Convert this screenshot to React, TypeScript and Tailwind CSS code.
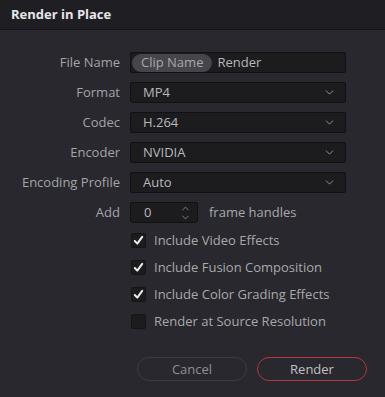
import { ChevronDown, ChevronUp } from 'lucide-react';

const font = { fontFamily: '"Open Sans", "Noto Sans", sans-serif' };

function Label({ children }: { children: React.ReactNode }) {
  return <div className="w-[130px] shrink-0 pr-[10px] text-right text-[#a4a4a8]">{children}</div>;
}

function Select({ value }: { value: string }) {
  return (
    <div className="flex h-[21px] w-[216px] items-center justify-between rounded-[2px] border border-[#111113] bg-[#1c1c1f] pl-[12px] pr-[9px] text-[#b8b8bc]">
      <span>{value}</span>
      <ChevronDown size={13} strokeWidth={1.6} className="text-[#a0a0a4]" />
    </div>
  );
}

function Check({ label, checked }: { label: string; checked: boolean }) {
  return (
    <div className="flex h-[27px] items-center pl-[131px]">
      <div className="flex h-[15px] w-[15px] items-center justify-center rounded-[2px] border border-[#151517] bg-[#1c1c1f]">
        {checked && (
          <svg width="11" height="11" viewBox="0 0 11 11">
            <path d="M1.8 6 L4.3 8.6 L9.2 1.8" fill="none" stroke="#ececec" strokeWidth="2" strokeLinecap="round" strokeLinejoin="round" />
          </svg>
        )}
      </div>
      <span className="ml-[8px] text-[#a8a8ac]">{label}</span>
    </div>
  );
}

export default function App() {
  const selects = [
    ['Format', 'MP4'],
    ['Codec', 'H.264'],
    ['Encoder', 'NVIDIA'],
    ['Encoding Profile', 'Auto'],
  ];

  return (
    <div style={font} className="flex h-[397px] w-[385px] flex-col bg-[#28282e] text-[13px] leading-none">
      <div className="flex h-[30px] shrink-0 items-center border-b border-[#141416] bg-[#1f1f23] pl-[11px] text-[13px] font-bold text-[#e6e6e8]">
        Render in Place
      </div>

      <div className="flex flex-col pt-[22px]">
        <div className="flex h-[30px] items-start">
          <div className="flex h-[21px] items-center">
            <Label>File Name</Label>
          </div>
          <div className="flex h-[21px] w-[216px] items-center rounded-[2px] border border-[#111113] bg-[#1c1c1f] pl-[1px] text-[#b8b8bc]">
            <span className="flex h-[18px] items-center rounded-full bg-[#45454b] px-[9px] text-[#a8a8ac]">Clip Name</span>
            <span className="ml-[5px]">Render</span>
          </div>
        </div>

        {selects.map(([label, value]) => (
          <div key={label} className="flex h-[30px] items-start">
            <div className="flex h-[21px] items-center">
              <Label>{label}</Label>
            </div>
            <Select value={value} />
          </div>
        ))}

        <div className="flex h-[25px] items-start">
          <div className="flex h-[21px] items-center">
            <Label>Add</Label>
          </div>
          <div className="flex h-[21px] w-[68px] items-center justify-between rounded-[2px] border border-[#111113] bg-[#1c1c1f] pl-[13px] pr-[6px] text-[#b8b8bc]">
            <span>0</span>
            <div className="flex flex-col items-center text-[#a0a0a4]">
              <ChevronUp size={11} strokeWidth={1.6} className="-mb-[2px]" />
              <ChevronDown size={11} strokeWidth={1.6} />
            </div>
          </div>
          <div className="flex h-[21px] items-center pl-[11px] text-[#a8a8ac]">frame handles</div>
        </div>

        <div className="flex flex-col">
          <Check label="Include Video Effects" checked />
          <Check label="Include Fusion Composition" checked />
          <Check label="Include Color Grading Effects" checked />
          <Check label="Render at Source Resolution" checked={false} />
        </div>
      </div>

      <div className="mt-[22px] flex items-center gap-[10px] pl-[137px]">
        <button className="flex h-[24px] w-[110px] items-center justify-center rounded-full border border-[#3c3c42] bg-[#28282e] text-[#909094]">
          Cancel
        </button>
        <button className="flex h-[24px] w-[110px] items-center justify-center rounded-full border border-[#b03a40] bg-[#28282e] text-[#c0c0c4]">
          Render
        </button>
      </div>
    </div>
  );
}
